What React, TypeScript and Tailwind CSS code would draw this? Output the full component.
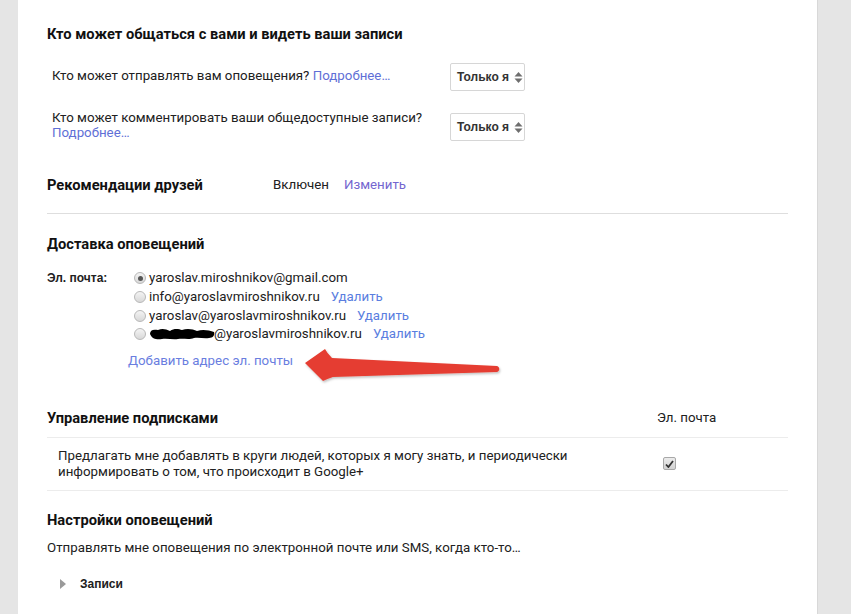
import React from "react";

const link = "text-[#5f6fd6]";

function Stepper() {
  return (
    <svg width="9" height="13" viewBox="0 0 9 13" className="ml-[5px]">
      <path d="M4.5 1 L8.5 5.5 H0.5 Z" fill="#6e6e6e" />
      <path d="M4.5 12 L8.5 7.5 H0.5 Z" fill="#6e6e6e" />
    </svg>
  );
}

function Select() {
  return (
    <div className="flex h-[28px] w-[75px] shrink-0 items-center rounded-[2px] border border-[#d6d6d6] bg-white pl-[6px] font-['Liberation_Sans',sans-serif] text-[12px] font-bold text-[#333]">
      Только я
      <Stepper />
    </div>
  );
}

function Radio({ on }: { on?: boolean }) {
  return (
    <span className="mr-[3px] flex h-[12px] w-[12px] items-center justify-center rounded-full border border-[#b8b8b8] bg-gradient-to-b from-[#f4f4f4] to-[#d8d8d8]">
      {on && <span className="h-[5px] w-[5px] rounded-full bg-[#555]" />}
    </span>
  );
}

function Redacted() {
  return (
    <svg width="66" height="14" viewBox="0 0 66 14" className="mr-[-1px]">
      <path
        d="M1 7 C1 3 4 2 9 3 C13 1 17 2 21 4 C25 1 30 2 33 3 C38 1 44 2 48 4 C53 2 60 3 65 5 C66 8 64 11 60 11 C55 12 50 10 45 11 C40 13 34 11 29 12 C24 13 18 11 13 12 C8 13 3 12 1 7 Z"
        fill="#000"
      />
    </svg>
  );
}

function EmailRow({
  on,
  children,
  remove,
}: {
  on?: boolean;
  children: React.ReactNode;
  remove?: boolean;
}) {
  return (
    <div className="flex h-[18.7px] items-center">
      <Radio on={on} />
      <span className="flex items-center">{children}</span>
      {remove && <span className="ml-[11px] text-[#5a7ee0]">Удалить</span>}
    </div>
  );
}

export default function App() {
  return (
    <div className="flex h-[614px] w-[851px] overflow-hidden bg-[#e5e5e5] font-['Roboto',sans-serif] text-[13.3px] text-[#212121]">
      <div className="w-[18px] shrink-0" />
      <div className="relative w-[800px] shrink-0 border-r border-[#d8d8d8] bg-white pl-[29px] pr-[29px] pt-[24px]">
        <h2 className="text-[14.7px] font-bold leading-[20px] text-[#111]">
          Кто может общаться с вами и видеть ваши записи
        </h2>

        <div className="mt-[19px] flex items-center pl-[5px]">
          <div className="mb-[2px] w-[398px] leading-[16px]">
            Кто может отправлять вам оповещения?{" "}
            <span className={link}>Подробнее…</span>
          </div>
          <Select />
        </div>

        <div className="mt-[22px] flex items-start pl-[5px]">
          <div className="mt-[-3px] w-[398px] leading-[15px]">
            Кто может комментировать ваши общедоступные записи?
            <br />
            <span className={link}>Подробнее…</span>
          </div>
          <Select />
        </div>

        <div className="mt-[34px] flex items-center leading-[20px]">
          <h2 className="w-[226px] text-[14.7px] font-bold text-[#111]">
            Рекомендации друзей
          </h2>
          <span>Включен</span>
          <span className="ml-[15px] text-[#7466cf]">Изменить</span>
        </div>

        <div className="mt-[18px] h-px bg-[#dedede]" />

        <h2 className="mt-[20px] text-[14.7px] font-bold leading-[20px] text-[#111]">
          Доставка оповещений
        </h2>

        <div className="mt-[15px] flex">
          <div className="w-[87px] pt-[1px] font-['Liberation_Sans',sans-serif] text-[12px] font-bold leading-[16px]">
            Эл. почта:
          </div>
          <div>
            <EmailRow on>yaroslav.miroshnikov@gmail.com</EmailRow>
            <EmailRow remove>info@yaroslavmiroshnikov.ru</EmailRow>
            <EmailRow remove>yaroslav@yaroslavmiroshnikov.ru</EmailRow>
            <EmailRow remove>
              <Redacted />
              @yaroslavmiroshnikov.ru
            </EmailRow>
            <div className="ml-[-6px] mt-[9px] leading-[16px] text-[#6a7edf]">
              Добавить адрес эл. почты
            </div>
          </div>
        </div>

        <div className="mt-[39px] flex items-center leading-[20px]">
          <h2 className="w-[610px] text-[14.7px] font-bold text-[#111]">
            Управление подписками
          </h2>
          <span>Эл. почта</span>
        </div>

        <div className="mt-[9px] h-px bg-[#ececec]" />

        <div className="flex items-center py-[10px] pl-[11px]">
          <div className="w-[605px] leading-[16px]">
            Предлагать мне добавлять в круги людей, которых я могу знать, и периодически
            <br />
            информировать о том, что происходит в Google+
          </div>
          <span className="flex h-[13px] w-[13px] items-center justify-center rounded-[2px] border border-[#a8a8a8] bg-gradient-to-b from-[#ececec] to-[#d2d2d2]">
            <svg width="9" height="8" viewBox="0 0 9 8">
              <path d="M1 4.5 L3.4 7 L8 1" fill="none" stroke="#333" strokeWidth="1.8" />
            </svg>
          </span>
        </div>

        <div className="h-px bg-[#ececec]" />

        <h2 className="mt-[19px] text-[14.7px] font-bold leading-[20px] text-[#111]">
          Настройки оповещений
        </h2>

        <div className="mt-[10px] leading-[16px]">
          Отправлять мне оповещения по электронной почте или SMS, когда кто-то…
        </div>

        <div className="mt-[19px] flex items-center pl-[13px]">
          <svg width="6" height="10" viewBox="0 0 6 10">
            <path d="M0 0 L6 5 L0 10 Z" fill="#9a9a9a" />
          </svg>
          <span className="ml-[14px] font-['Liberation_Sans',sans-serif] text-[12px] font-bold">
            Записи
          </span>
        </div>

        {/* red pointer drawn over the add-address link */}
        <svg
          width="210"
          height="50"
          viewBox="0 0 210 50"
          className="absolute left-[282px] top-[340px]"
        >
          <defs>
            <filter id="sh" x="-10%" y="-20%" width="120%" height="150%">
              <feDropShadow dx="1" dy="1.5" stdDeviation="1" floodColor="#000" floodOpacity="0.25" />
            </filter>
          </defs>
          <path
            d="M5 23 L25 9 Q27 13 32 18 L197 26 C200 27 200 31 197 32 L33 37 Q27 39 23 41 Z"
            fill="#e53e31"
            filter="url(#sh)"
          />
        </svg>
      </div>
      <div className="flex-1" />
    </div>
  );
}
